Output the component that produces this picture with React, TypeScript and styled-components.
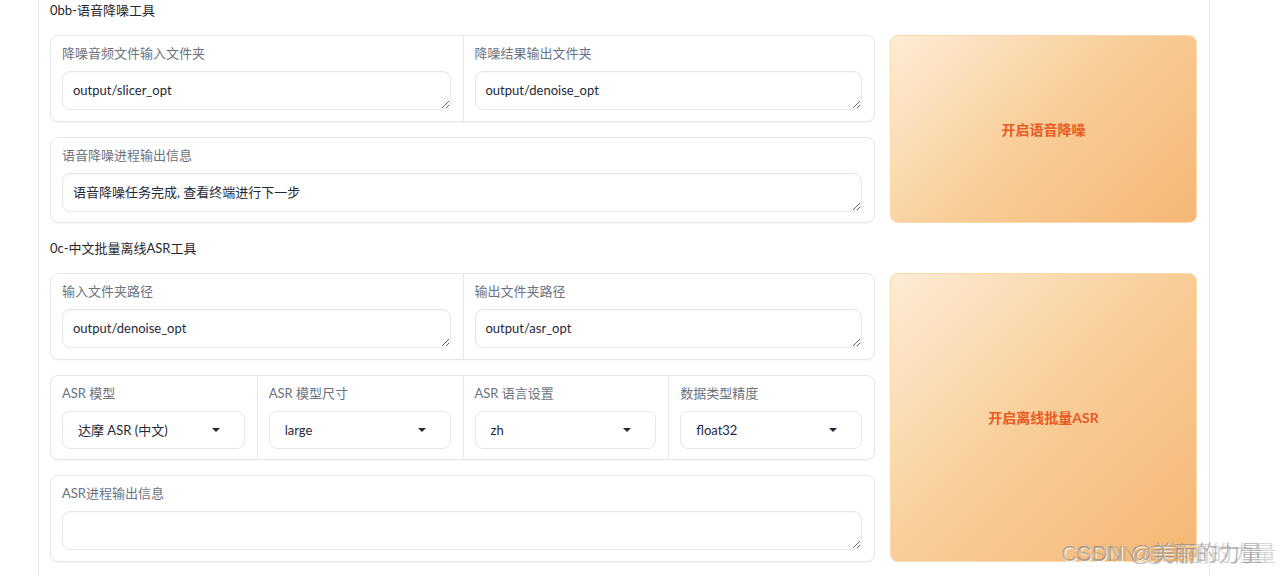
import styled, { createGlobalStyle } from "styled-components";

const GlobalStyle = createGlobalStyle`
  html, body {
    margin: 0;
    padding: 0;
    background: #ffffff;
    overflow: hidden;
  }
  body {
    font-family: Lato, "Noto Sans CJK SC", sans-serif;
    color: #1f2937;
  }
`;

const Page = styled.div`
  position: relative;
  height: 576px;
  overflow: hidden;
`;

const Panel = styled.div`
  margin-left: 38px;
  width: 1147px;
  min-height: 600px;
  padding: 1px 12px 0 11px;
  border-left: 1px solid #e5e7eb;
  border-right: 1px solid #e5e7eb;
  display: flex;
  flex-direction: column;
  gap: 16px;
`;

const SectionTitle = styled.div`
  font-size: 13px;
  line-height: 18px;
  color: #27272a;
`;

const Row = styled.div`
  display: flex;
  gap: 15px;
`;

const Stack = styled.div`
  flex: 1;
  display: flex;
  flex-direction: column;
  gap: 15px;
`;

const Card = styled.div<{ $cols: number }>`
  display: grid;
  grid-template-columns: repeat(${(p) => p.$cols}, 1fr);
  border: 1px solid #e5e7eb;
  border-radius: 8px;
  background: #ffffff;
  box-shadow: 0 1px 2px rgba(0, 0, 0, 0.04);
`;

const Field = styled.div`
  padding: 9px 12px 10.5px 11px;
  display: flex;
  flex-direction: column;
  gap: 10px;
  & + & {
    border-left: 1px solid #e5e7eb;
  }
`;

const Label = styled.div`
  font-size: 13px;
  line-height: 16px;
  color: #6b7280;
`;

const TextBox = styled.textarea`
  box-sizing: border-box;
  height: 39px;
  width: 100%;
  margin: 0;
  padding: 9px 10px;
  border: 1px solid #e5e7eb;
  border-radius: 8px;
  box-shadow: inset 0 1px 2px rgba(0, 0, 0, 0.04);
  font-family: Lato, "Noto Sans CJK SC", sans-serif;
  font-size: 13px;
  line-height: 19px;
  color: #1f2937;
  resize: vertical;
  outline: none;
  background: #ffffff;
`;

const Select = styled.div`
  box-sizing: border-box;
  height: 38px;
  padding: 0 24px 0 15px;
  border: 1px solid #e5e7eb;
  border-radius: 8px;
  display: flex;
  align-items: center;
  justify-content: space-between;
  font-size: 13px;
  color: #1f2937;
  background: #ffffff;
`;

const Caret = styled.span`
  width: 0;
  height: 0;
  border-left: 4px solid transparent;
  border-right: 4px solid transparent;
  border-top: 4px solid #1f2937;
`;

const ActionButton = styled.button`
  width: 307px;
  flex-shrink: 0;
  border: 1px solid #fbd9ad;
  border-radius: 8px;
  background: linear-gradient(135deg, #fdecd5 0%, #f8cd97 50%, #f5b774 100%);
  color: #ea5a24;
  font-family: Lato, "Noto Sans CJK SC", sans-serif;
  font-size: 14px;
  font-weight: 700;
  cursor: pointer;
`;

const Watermark = styled.div`
  position: absolute;
  right: 18px;
  bottom: 9px;
  font-family: "Liberation Sans", "Noto Sans CJK SC", sans-serif;
  font-size: 22px;
  line-height: 27px;
  color: rgba(125, 125, 125, 0.5);
  text-shadow: 14px 0 0 rgba(150, 150, 150, 0.4), 1px 1px 0 rgba(255, 255, 255, 0.8);
  white-space: nowrap;
`;

function TextField({ label, value }: { label: string; value: string }) {
  return (
    <Field>
      <Label>{label}</Label>
      <TextBox readOnly value={value} rows={1} />
    </Field>
  );
}

function SelectField({ label, value }: { label: string; value: string }) {
  return (
    <Field>
      <Label>{label}</Label>
      <Select>
        <span>{value}</span>
        <Caret />
      </Select>
    </Field>
  );
}

export default function App() {
  return (
    <Page>
      <GlobalStyle />
      <Panel>
        <SectionTitle>0bb-语音降噪工具</SectionTitle>
        <Row>
          <Stack>
            <Card $cols={2}>
              <TextField label="降噪音频文件输入文件夹" value="output/slicer_opt" />
              <TextField label="降噪结果输出文件夹" value="output/denoise_opt" />
            </Card>
            <Card $cols={1}>
              <TextField label="语音降噪进程输出信息" value="语音降噪任务完成, 查看终端进行下一步" />
            </Card>
          </Stack>
          <ActionButton>开启语音降噪</ActionButton>
        </Row>

        <SectionTitle>0c-中文批量离线ASR工具</SectionTitle>
        <Row>
          <Stack>
            <Card $cols={2}>
              <TextField label="输入文件夹路径" value="output/denoise_opt" />
              <TextField label="输出文件夹路径" value="output/asr_opt" />
            </Card>
            <Card $cols={4}>
              <SelectField label="ASR 模型" value="达摩 ASR (中文)" />
              <SelectField label="ASR 模型尺寸" value="large" />
              <SelectField label="ASR 语言设置" value="zh" />
              <SelectField label="数据类型精度" value="float32" />
            </Card>
            <Card $cols={1}>
              <TextField label="ASR进程输出信息" value="" />
            </Card>
          </Stack>
          <ActionButton>开启离线批量ASR</ActionButton>
        </Row>
      </Panel>
      <Watermark>CSDN @美丽的力量</Watermark>
    </Page>
  );
}
